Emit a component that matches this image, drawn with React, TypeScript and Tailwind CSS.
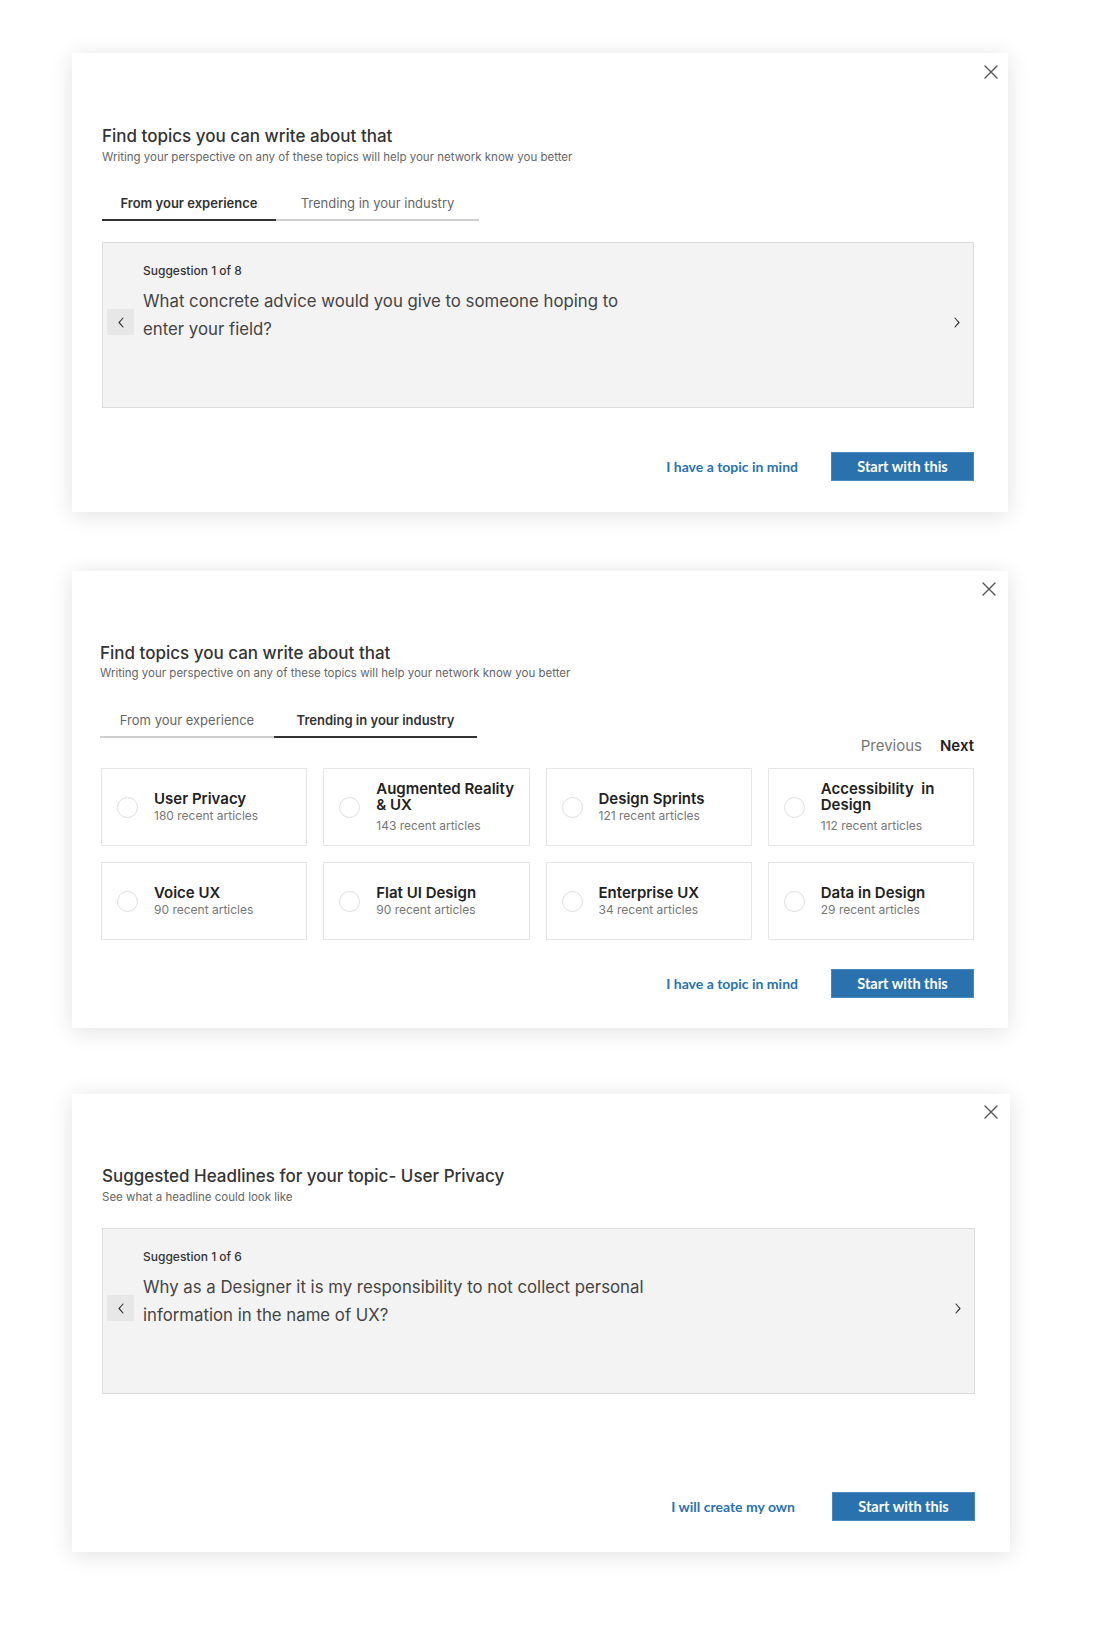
import React from "react";

const topics = [
  { title: ["User Privacy"], count: 180 },
  { title: ["Augmented Reality", "& UX"], count: 143 },
  { title: ["Design Sprints"], count: 121 },
  { title: ["Accessibility  in", "Design"], count: 112 },
  { title: ["Voice UX"], count: 90 },
  { title: ["Flat UI Design"], count: 90 },
  { title: ["Enterprise UX"], count: 34 },
  { title: ["Data in Design"], count: 29 },
];

function CloseIcon() {
  return (
    <svg width="14" height="14" viewBox="0 0 14 14" fill="none" stroke="#555" strokeWidth="1.4" strokeLinecap="round">
      <path d="M1 1L13 13M13 1L1 13" />
    </svg>
  );
}

function Chevron({ dir }: { dir: "left" | "right" }) {
  return (
    <svg width="6" height="11" viewBox="0 0 6 11" fill="none" stroke="#333" strokeWidth="1.1" strokeLinecap="round" strokeLinejoin="round">
      <path d={dir === "left" ? "M5 1Q3 3.5 1 5.5Q3 7.5 5 10" : "M1 1Q3 3.5 5 5.5Q3 7.5 1 10"} />
    </svg>
  );
}

function Header({ title, subtitle, tight }: { title: string; subtitle: string; tight?: boolean }) {
  return (
    <>
      <h2 className="text-[17px] font-medium leading-[22px] text-[#333]">{title}</h2>
      <p className={`${tight ? "mt-[1px]" : "mt-[2px]"} text-[11.5px] leading-[16px] text-[#666]`}>{subtitle}</p>
    </>
  );
}

function Tabs({ active, className }: { active: 0 | 1; className: string }) {
  const on = "border-[#333] font-semibold text-[#333]";
  const off = "border-[#cfcfcf] text-[#666]";
  return (
    <div className={`flex ${className}`}>
      <div className={`w-[174px] border-b-2 pb-[6px] text-center text-[13px] leading-[20px] ${active === 0 ? on : off}`}>
        From your experience
      </div>
      <div className={`w-[203px] border-b-2 pb-[6px] text-center text-[13px] leading-[20px] ${active === 1 ? on : off}`}>
        Trending in your industry
      </div>
    </div>
  );
}

function SuggestionBox({ label, lines }: { label: string; lines: string[] }) {
  return (
    <div className="flex h-[166px] items-center border border-[#dcdcdc] bg-[#f3f3f3] pb-[6px]">
      <button className="ml-[4px] flex h-[26px] w-[27px] items-center justify-center bg-[#e7e7e7]">
        <Chevron dir="left" />
      </button>
      <div className="ml-[9px] self-start pt-[20px]">
        <div className="text-[12px] font-medium leading-[16px] text-[#333]">{label}</div>
        <div className="mt-[8px] text-[16.8px] leading-[28px] text-[#444]">
          {lines[0]}
          <br />
          {lines[1]}
        </div>
      </div>
      <button className="ml-auto mr-[13px] flex items-center">
        <Chevron dir="right" />
      </button>
    </div>
  );
}

function Footer({ link, gap, className }: { link: string; gap: string; className: string }) {
  return (
    <div className={`flex items-center justify-end font-['Lato',sans-serif] ${className}`}>
      <a className="text-[14px] font-bold text-[#2a72ad]">{link}</a>
      <button className={`${gap} h-[29px] w-[143px] border border-[#4a88bd] bg-[#2a72ad] text-[14.5px] font-bold text-white`}>
        Start with this
      </button>
    </div>
  );
}

function TopicCard({ title, count }: { title: string[]; count: number }) {
  return (
    <div className="flex h-[78px] items-center border-[1.5px] border-[#e6e6e6] bg-white pl-[15px]">
      <span className="h-[21px] w-[21px] shrink-0 rounded-full border border-[#dedede] bg-white" />
      <div className="ml-[16px]">
        <div className="whitespace-pre text-[15px] font-semibold leading-[16px] text-[#222]">
          {title.map((t, i) => (
            <div key={i}>{t}</div>
          ))}
        </div>
        <div className={`${title.length > 1 ? "mt-[5px]" : "mt-[1px]"} text-[12px] leading-[16px] text-[#777]`}>
          {count} recent articles
        </div>
      </div>
    </div>
  );
}

export default function App() {
  return (
    <div className="min-h-[1638px] bg-white pl-[72px] pt-[53px] font-['Inter',sans-serif]">
      {/* experience tab */}
      <div className="relative w-[936px] bg-white pb-[31px] pl-[30px] pr-[34px] pt-[72px] shadow-[0_3px_22px_rgba(0,0,0,0.12)]">
        <button className="absolute right-[10px] top-[12px]">
          <CloseIcon />
        </button>
        <Header
          title="Find topics you can write about that"
          subtitle="Writing your perspective on any of these topics will help your network know you better"
        />
        <Tabs active={0} className="mt-[28px]" />
        <div className="mt-[21px]">
          <SuggestionBox
            label="Suggestion 1 of 8"
            lines={["What concrete advice would you give to someone hoping to", "enter your field?"]}
          />
        </div>
        <Footer link="I have a topic in mind" gap="ml-[33px]" className="mt-[44px]" />
      </div>

      {/* trending tab */}
      <div className="relative mt-[59px] w-[936px] bg-white pb-[30px] pl-[28px] pr-[34px] pt-[71px] shadow-[0_3px_22px_rgba(0,0,0,0.12)]">
        <button className="absolute right-[12px] top-[11px]">
          <CloseIcon />
        </button>
        <Header
          tight
          title="Find topics you can write about that"
          subtitle="Writing your perspective on any of these topics will help your network know you better"
        />
        <Tabs active={1} className="mt-[29px]" />
        <div className="flex justify-end gap-[18px] text-[15px] leading-[16px]">
          <span className="text-[#777]">Previous</span>
          <span className="font-semibold text-[#222]">Next</span>
        </div>
        <div className="mt-[14px] grid grid-cols-4 gap-x-4 gap-y-4 pl-[1px]">
          {topics.map((t) => (
            <TopicCard key={t.title.join(" ")} title={t.title} count={t.count} />
          ))}
        </div>
        <Footer link="I have a topic in mind" gap="ml-[33px]" className="mt-[29px]" />
      </div>

      {/* headlines */}
      <div className="relative mt-[66px] mb-[86px] w-[938px] bg-white pb-[31px] pl-[30px] pr-[35px] pt-[71px] shadow-[0_3px_22px_rgba(0,0,0,0.12)]">
        <button className="absolute right-[12px] top-[11px]">
          <CloseIcon />
        </button>
        <Header title="Suggested Headlines for your topic- User Privacy" subtitle="See what a headline could look like" />
        <div className="mt-[23px]">
          <SuggestionBox
            label="Suggestion 1 of 6"
            lines={["Why as a Designer it is my responsibility to not collect personal", "information in the name of UX?"]}
          />
        </div>
        <Footer link="I will create my own" gap="ml-[37px]" className="mt-[98px]" />
      </div>
    </div>
  );
}
